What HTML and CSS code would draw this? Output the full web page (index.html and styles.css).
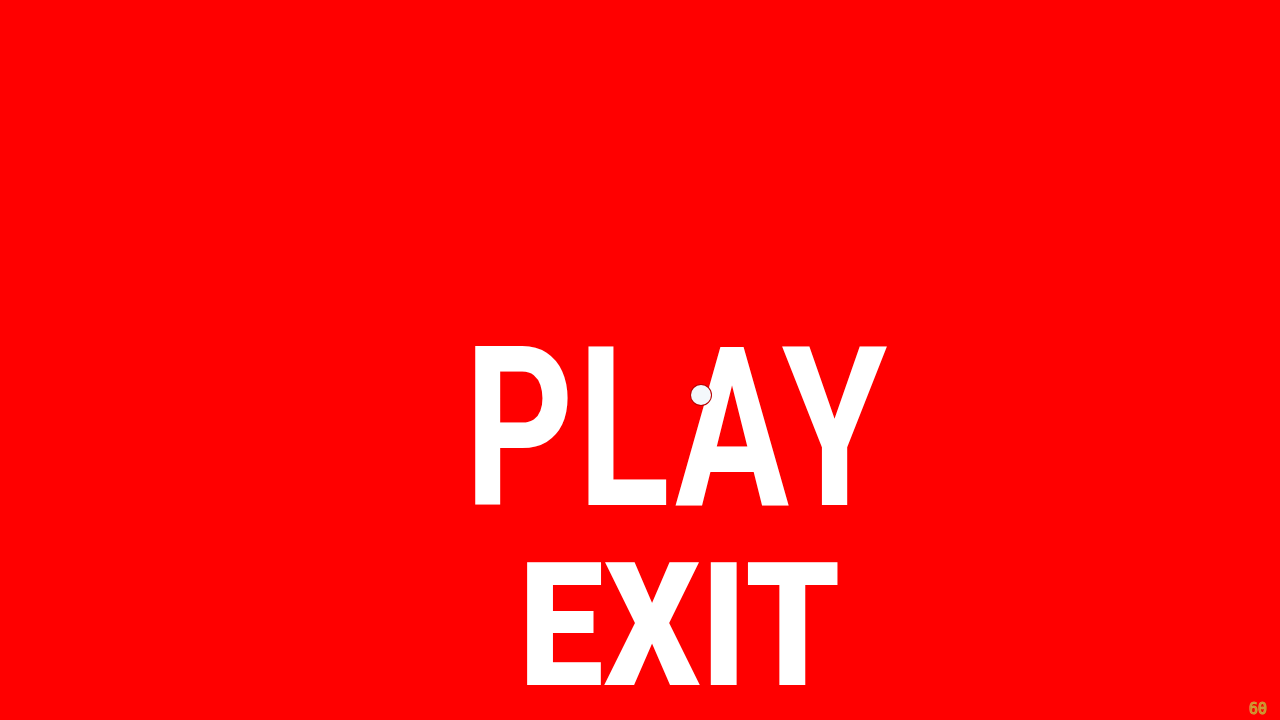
FILE: index.html
```html
<!DOCTYPE html>
<html lang="en">
<head>
<meta charset="utf-8">
<title>Menu</title>
<link rel="stylesheet" href="styles.css">
</head>
<body>
<main class="menu">
  <div class="item item-play"><span class="label label-play">PLAY</span></div>
  <div class="item item-exit"><span class="label label-exit">EXIT</span></div>
</main>
<div class="cursor"></div>
<div class="fps">60</div>
</body>
</html>
```

FILE: styles.css
```css
html, body {
  margin: 0;
  padding: 0;
  width: 1280px;
  height: 720px;
  overflow: hidden;
  background: #ff0000;
}

.menu {
  display: flex;
  flex-direction: column;
  align-items: center;
  padding-top: 318px;
  padding-left: 76px;
  box-sizing: border-box;
  width: 1280px;
  height: 720px;
}

.item {
  display: flex;
  justify-content: center;
}

.label {
  display: inline-block;
  color: #ffffff;
  font-family: Roboto, "Liberation Sans", sans-serif;
  line-height: 1;
  transform-origin: center;
  white-space: nowrap;
}

.label-play {
  font-size: 222px;
  font-weight: 700;
  letter-spacing: 5px;
  transform: scaleX(0.765);
}

.label-exit {
  font-size: 172px;
  font-weight: 900;
  letter-spacing: 1px;
  transform: translateX(2px) scaleX(0.875);
}

.cursor {
  position: absolute;
  left: 691px;
  top: 385px;
  width: 20px;
  height: 20px;
  border-radius: 50%;
  background: #f4f8fb;
  box-shadow: 0 0 0 1px #b80000;
}

.fps {
  position: absolute;
  right: 13px;
  bottom: 3px;
  font-family: "DejaVu Sans Mono", monospace;
  font-size: 15px;
  line-height: 15px;
  color: #e85a18;
  -webkit-text-stroke: 1px #c9a43a;
}
```
